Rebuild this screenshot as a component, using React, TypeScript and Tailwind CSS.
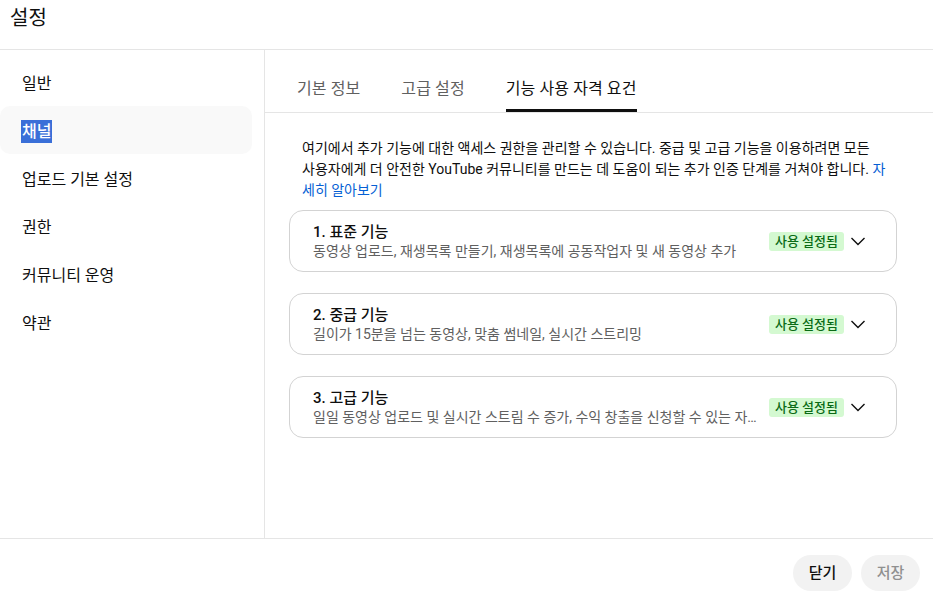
const sections = ["일반", "채널", "업로드 기본 설정", "권한", "커뮤니티 운영", "약관"];
const tabs = ["기본 정보", "고급 설정", "기능 사용 자격 요건"];
const features = [
  { title: "1. 표준 기능", desc: "동영상 업로드, 재생목록 만들기, 재생목록에 공동작업자 및 새 동영상 추가" },
  { title: "2. 중급 기능", desc: "길이가 15분을 넘는 동영상, 맞춤 썸네일, 실시간 스트리밍" },
  {
    title: "3. 고급 기능",
    desc: "일일 동영상 업로드 및 실시간 스트림 수 증가, 수익 창출을 신청할 수 있는 자격 등",
  },
];

function Chevron() {
  return (
    <svg width="24" height="24" viewBox="0 0 24 24" fill="none" stroke="#0f0f0f" strokeWidth="1.4">
      <path d="M5.5 9l6.5 6.5L18.5 9" />
    </svg>
  );
}

export default function App() {
  return (
    <div
      className="flex flex-col h-[595px] w-[933px] bg-white text-[#0f0f0f] overflow-hidden"
      style={{ fontFamily: "Roboto, 'Noto Sans CJK KR', sans-serif" }}
    >
      <header className="h-[50px] shrink-0 border-b border-[#e5e5e5] flex items-start pl-[10px] pt-[4px]">
        <h1 className="text-[20px] leading-[28px]">설정</h1>
      </header>

      <div className="flex flex-1 min-h-0">
        <nav className="w-[265px] shrink-0 border-r border-[#e5e5e5] pt-[8px]">
          {sections.map((s) => (
            <div
              key={s}
              className={
                s === "채널"
                  ? "w-[252px] h-[48px] flex items-center pl-[21px] pt-[3px] rounded-[10px] bg-[#f9f9f9] text-[16px]"
                  : "w-[252px] h-[48px] flex items-center pl-[22px] pt-[3px] text-[16px]"
              }
            >
              {s === "채널" ? (
                <span className="bg-[#3a6fd8] text-white px-[1px] leading-[23px] font-medium">{s}</span>
              ) : (
                s
              )}
            </div>
          ))}
        </nav>

        <main className="flex-1 min-w-0 flex flex-col">
          <div className="h-[63px] border-b border-[#e5e5e5] flex items-end gap-[41px] pl-[32px]">
            {tabs.map((t, i) => (
              <div
                key={t}
                className={
                  i === 2
                    ? "h-full flex items-end pb-[8px] text-[16px] tracking-[0.1px] text-[#0f0f0f] border-b-[3px] border-[#0f0f0f]"
                    : "h-full flex items-end pb-[8px] text-[16px] tracking-[0.1px] text-[#606060] border-b-[3px] border-transparent"
                }
              >
                {t}
              </div>
            ))}
          </div>

          <div className="pl-[24px] pr-[36px] pt-[25px]">
            <p className="pl-[13px] pr-[4px] text-[14px] leading-[21px] break-all">
              여기에서 추가 기능에 대한 액세스 권한을 관리할 수 있습니다. 중급 및 고급 기능을 이용하려면 모든{" "}
              <br />
              사용자에게 더 안전한 YouTube 커뮤니티를 만드는 데 도움이 되는 추가 인증 단계를 거쳐야 합니다.{" "}
              <span className="text-[#065fd4]">자세히 알아보기</span>
            </p>

            <div className="flex flex-col gap-[21px] mt-[9px]">
              {features.map((f) => (
                <div
                  key={f.title}
                  className="h-[62px] border border-[#d3d3d3] rounded-[14px] flex items-center pl-[23px] pr-[26px]"
                >
                  <div className="flex-1 min-w-0">
                    <div className="text-[15px] leading-[20px] font-medium">{f.title}</div>
                    <div className="text-[14px] leading-[19px] text-[#606060] truncate pr-[8px]">{f.desc}</div>
                  </div>
                  <span className="shrink-0 bg-[#d4f9d1] text-[#0b6b16] text-[13px] leading-[19px] px-[6px] rounded-[3px] font-medium">
                    사용 설정됨
                  </span>
                  <span className="ml-[2px] shrink-0">
                    <Chevron />
                  </span>
                </div>
              ))}
            </div>
          </div>
        </main>
      </div>

      <footer className="h-[57px] shrink-0 border-t border-[#e5e5e5] flex items-start justify-end gap-[9px] pt-[16px] pr-[13px]">
        <button className="h-[36px] w-[59px] rounded-full bg-[#f2f2f2] text-[15px] font-medium">닫기</button>
        <button className="h-[36px] w-[59px] rounded-full bg-[#f2f2f2] text-[15px] font-medium text-[#909090]">
          저장
        </button>
      </footer>
    </div>
  );
}
